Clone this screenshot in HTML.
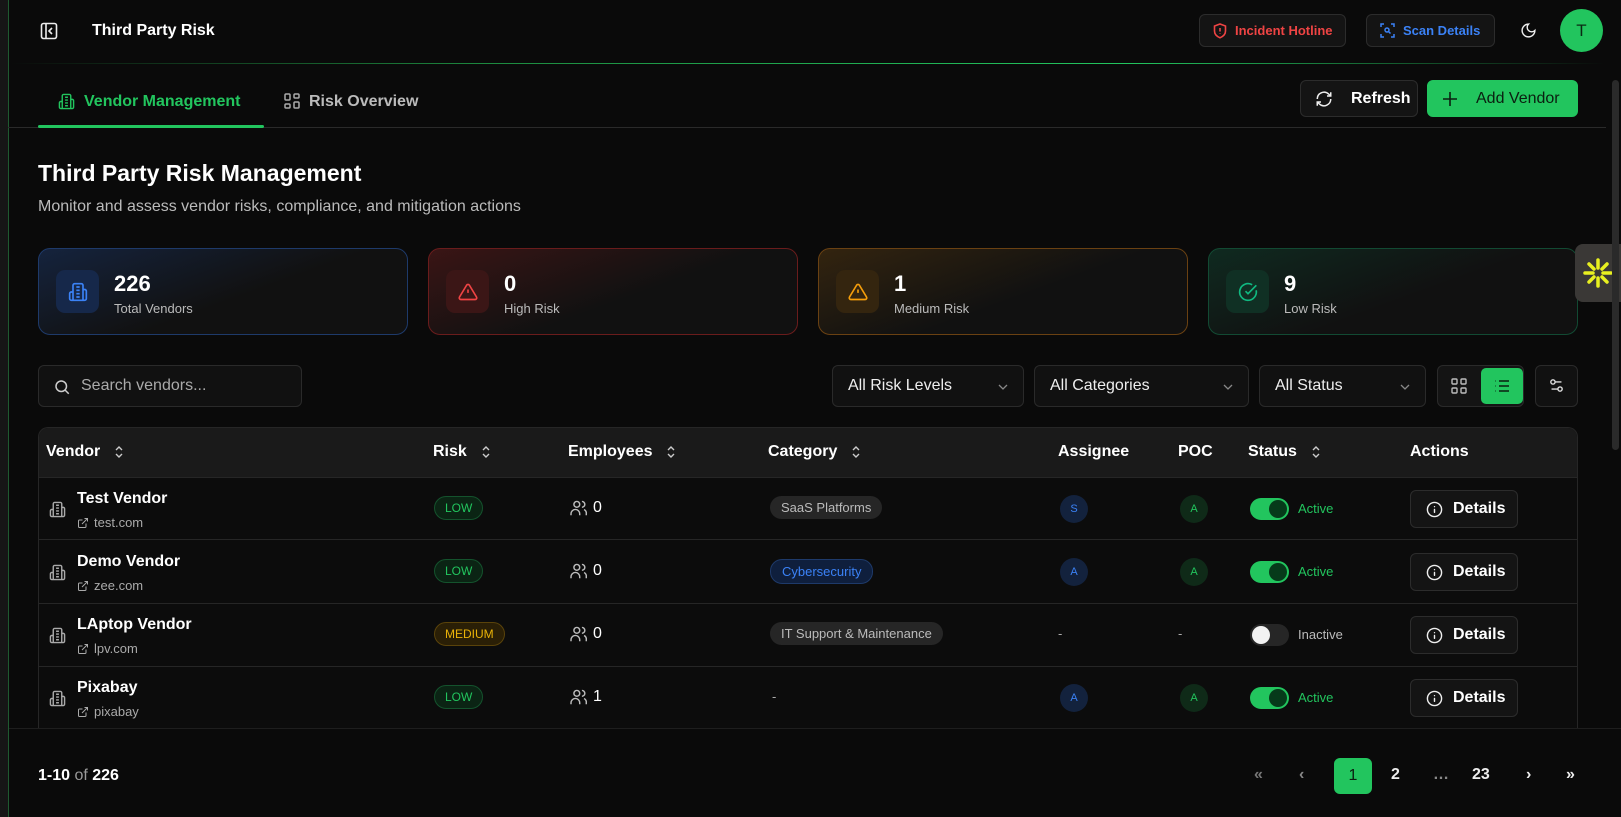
<!DOCTYPE html>
<html><head><meta charset="utf-8"><style>
*{box-sizing:border-box;margin:0;padding:0}
body{width:1621px;height:817px;overflow:hidden;background:#0a0a0a;font-family:"Liberation Sans",sans-serif;color:#fff;position:relative}
.abs{position:absolute}
svg{display:block}
.btn{position:absolute;border:1px solid #2c2c2c;background:#141414;border-radius:6px;display:flex;align-items:center;font-size:13px;font-weight:bold}
.card{position:absolute;top:248px;width:370px;height:87px;border-radius:12px;border:1px solid}
.card .ib{position:absolute;left:17px;top:21px;width:43px;height:43px;border-radius:9px;display:flex;align-items:center;justify-content:center}
.card .n{position:absolute;left:75px;top:22px;font-size:22px;font-weight:bold}
.card .l{position:absolute;left:75px;top:52px;font-size:13px;color:#bbb}
.sel{position:absolute;top:365px;height:42px;border:1px solid #2a2a2a;background:#111;border-radius:6px;font-size:16px;color:#eee;display:flex;align-items:center;padding-left:15px}
.sel svg{position:absolute;right:14px;top:15px}
.th{position:absolute;top:443px;font-size:16px;font-weight:bold;display:flex;align-items:center;gap:14px}
.row{position:absolute;left:38px;width:1540px;border-top:1px solid #262626}
.vn{position:absolute;left:39px;font-size:16px;font-weight:bold}
.vu{position:absolute;left:39px;font-size:13px;color:#aaa;display:flex;align-items:center;gap:5px}
.pill{position:absolute;font-size:12px;border-radius:12px;padding:4px 10px;border:1px solid}
.cat{position:absolute;left:732px;font-size:13px;border-radius:12px;padding:4px 11px;background:#262626;color:#bbb}
.av{position:absolute;width:28px;height:28px;border-radius:50%;font-size:11px;display:flex;align-items:center;justify-content:center}
.tog{position:absolute;left:1212px;width:39px;height:22px;border-radius:11px}
.tog i{position:absolute;top:2px;width:18px;height:18px;border-radius:50%}
.st{position:absolute;left:1260px;font-size:13px}
.det{position:absolute;left:1372px;width:108px;height:38px;border:1px solid #2c2c2c;background:#141414;border-radius:6px;display:flex;align-items:center;gap:10px;padding-left:15px;font-size:16px;font-weight:bold}
.pg{position:absolute;top:766px;font-size:16px;font-weight:bold;color:#eee}
</style></head><body>
<svg width="0" height="0" style="position:absolute"><defs>
<symbol id="srt" viewBox="0 0 10 16"><path d="M2 6l3-3 3 3M2 10l3 3 3-3" fill="none" stroke="#ccc" stroke-width="1.4"/></symbol>
<symbol id="inf" viewBox="0 0 24 24"><circle cx="12" cy="12" r="10" fill="none" stroke="#eee" stroke-width="2"/><path d="M12 16v-4M12 8h.01" stroke="#eee" stroke-width="2" stroke-linecap="round"/></symbol>
<symbol id="bld" viewBox="0 0 24 24"><path fill="none" stroke="#aaa" stroke-width="2" d="M6 22V4a2 2 0 0 1 2-2h8a2 2 0 0 1 2 2v18zM6 12H4a2 2 0 0 0-2 2v6a2 2 0 0 0 2 2h2M18 9h2a2 2 0 0 1 2 2v9a2 2 0 0 1-2 2h-2M10 6h4M10 10h4M10 14h4M10 18h4"/></symbol>
<symbol id="ext" viewBox="0 0 24 24"><path fill="none" stroke="#aaa" stroke-width="2" d="M15 3h6v6M10 14 21 3M18 13v6a2 2 0 0 1-2 2H5a2 2 0 0 1-2-2V8a2 2 0 0 1 2-2h6"/></symbol>
</defs></svg>
<div class="abs" style="left:0;top:0;width:8px;height:817px;background:#161616"></div>
<div class="abs" style="left:8px;top:0;width:1px;height:817px;background:#1f5a30"></div>
<div class="abs" style="left:10px;top:63px;width:1595px;height:1px;background:linear-gradient(90deg,#0a0a0a,#1d8a3f 30%,#22c55e 70%,#0a0a0a)"></div>
<!-- header -->
<svg class="abs" style="left:40px;top:22px" width="18" height="18" viewBox="0 0 18 18" fill="none" stroke="#eee" stroke-width="1.6"><rect x="1.5" y="1.5" width="15" height="15" rx="2"/><path d="M6 1.5v15M12 6l-3 3 3 3"/></svg>
<div class="abs" style="left:92px;top:22px;font-size:16px;font-weight:bold">Third Party Risk</div>
<div class="btn" style="left:1199px;top:14px;width:147px;height:33px;color:#ef4444;padding-left:13px;gap:8px"><svg width="14" height="16" viewBox="0 0 14 16" fill="none" stroke="#ef4444" stroke-width="1.6"><path d="M7 1l5.5 2v5c0 3.5-2.5 5.5-5.5 6.8C4 13.5 1.5 11.5 1.5 8V3z"/><path d="M7 5v3.5M7 10.5v.5"/></svg>Incident Hotline</div>
<div class="btn" style="left:1366px;top:14px;width:129px;height:33px;color:#3b82f6;padding-left:13px;gap:8px"><svg width="15" height="15" viewBox="0 0 15 15" fill="none" stroke="#3b82f6" stroke-width="1.5"><path d="M1 4V1h3M11 1h3v3M14 11v3h-3M4 14H1v-3"/><circle cx="7" cy="7" r="2"/><path d="M8.5 8.5l2 2"/></svg>Scan Details</div>
<svg class="abs" style="left:1520px;top:22px" width="17" height="17" viewBox="0 0 24 24" fill="none" stroke="#eee" stroke-width="2"><path d="M12 3a6 6 0 0 0 9 9 9 9 0 1 1-9-9z"/></svg>
<div class="abs" style="left:1560px;top:9px;width:43px;height:43px;border-radius:50%;background:#22c55e;color:#0a2a14;font-size:17px;display:flex;align-items:center;justify-content:center">T</div>
<!-- tabs -->
<svg class="abs" style="left:58px;top:93px" width="17" height="17" viewBox="0 0 24 24" fill="none" stroke="#22c55e" stroke-width="2"><path d="M6 22V4a2 2 0 0 1 2-2h8a2 2 0 0 1 2 2v18zM6 12H4a2 2 0 0 0-2 2v6a2 2 0 0 0 2 2h2M18 9h2a2 2 0 0 1 2 2v9a2 2 0 0 1-2 2h-2M10 6h4M10 10h4M10 14h4M10 18h4"/></svg>
<div class="abs" style="left:84px;top:93px;font-size:16px;color:#22c55e;font-weight:bold">Vendor Management</div>
<svg class="abs" style="left:284px;top:93px" width="16" height="16" viewBox="0 0 16 16" fill="none" stroke="#aaa" stroke-width="1.5"><rect x="1" y="1" width="5" height="6" rx="1"/><rect x="10" y="1" width="5" height="4" rx="1"/><rect x="10" y="9" width="5" height="6" rx="1"/><rect x="1" y="11" width="5" height="4" rx="1"/></svg>
<div class="abs" style="left:309px;top:93px;font-size:16px;color:#bbb;font-weight:bold">Risk Overview</div>
<div class="abs" style="left:8px;top:127px;width:1598px;height:1px;background:#2a2a2a"></div>
<div class="abs" style="left:38px;top:125px;width:226px;height:3px;background:#22c55e;border-radius:2px"></div>
<div class="btn" style="left:1300px;top:80px;width:118px;height:37px;padding-left:14px;gap:18px;font-size:16px"><svg width="18" height="18" viewBox="0 0 24 24" fill="none" stroke="#eee" stroke-width="2"><path d="M3 12a9 9 0 0 1 15-6.7L21 8M21 3v5h-5M21 12a9 9 0 0 1-15 6.7L3 16M3 21v-5h5"/></svg>Refresh</div>
<div class="btn" style="left:1427px;top:80px;width:151px;height:37px;background:#22c55e;border-color:#22c55e;padding-left:14px;gap:18px;font-size:16px;color:#0b1f10;font-weight:normal"><svg width="16" height="16" viewBox="0 0 16 16" stroke="#0b1f10" stroke-width="1.6"><path d="M8 1v14M1 8h14"/></svg>Add Vendor</div>
<!-- title -->
<div class="abs" style="left:38px;top:160px;font-size:23px;font-weight:bold">Third Party Risk Management</div>
<div class="abs" style="left:38px;top:198px;font-size:16px;color:#bbb">Monitor and assess vendor risks, compliance, and mitigation actions</div>
<!-- cards -->
<div class="card" style="left:38px;border-color:#1e3a6a;background:linear-gradient(160deg,#15233d,#111 55%)"><div class="ib" style="background:#16284a"><svg width="20" height="20" viewBox="0 0 24 24" fill="none" stroke="#3b82f6" stroke-width="2"><path d="M6 22V4a2 2 0 0 1 2-2h8a2 2 0 0 1 2 2v18zM6 12H4a2 2 0 0 0-2 2v6a2 2 0 0 0 2 2h2M18 9h2a2 2 0 0 1 2 2v9a2 2 0 0 1-2 2h-2M10 6h4M10 10h4M10 14h4M10 18h4"/></svg></div><div class="n">226</div><div class="l">Total Vendors</div></div>
<div class="card" style="left:428px;border-color:#6a1c1c;background:linear-gradient(160deg,#3a1515,#111 55%)"><div class="ib" style="background:#3b1616"><svg width="20" height="20" viewBox="0 0 24 24" fill="none" stroke="#ef4444" stroke-width="2"><path d="M10.3 3.9 1.8 18a2 2 0 0 0 1.7 3h17a2 2 0 0 0 1.7-3L13.7 3.9a2 2 0 0 0-3.4 0zM12 9v4M12 17h.01"/></svg></div><div class="n">0</div><div class="l">High Risk</div></div>
<div class="card" style="left:818px;border-color:#6a4112;background:linear-gradient(160deg,#33240f,#111 55%)"><div class="ib" style="background:#34250f"><svg width="20" height="20" viewBox="0 0 24 24" fill="none" stroke="#f59e0b" stroke-width="2"><path d="M10.3 3.9 1.8 18a2 2 0 0 0 1.7 3h17a2 2 0 0 0 1.7-3L13.7 3.9a2 2 0 0 0-3.4 0zM12 9v4M12 17h.01"/></svg></div><div class="n">1</div><div class="l">Medium Risk</div></div>
<div class="card" style="left:1208px;border-color:#124a33;background:linear-gradient(160deg,#0f2a20,#111 55%)"><div class="ib" style="background:#103024"><svg width="20" height="20" viewBox="0 0 24 24" fill="none" stroke="#10b981" stroke-width="2"><path d="M21.8 10A10 10 0 1 1 17 3.3"/><path d="m9 11 3 3L22 4"/></svg></div><div class="n">9</div><div class="l">Low Risk</div></div>
<!-- widget -->
<div class="abs" style="left:1575px;top:244px;width:46px;height:58px;background:#3a3836;border-radius:8px 0 0 8px;display:flex;align-items:center;justify-content:center"><svg width="32" height="32" viewBox="0 0 32 32" stroke="#e8f020" stroke-width="3.5" stroke-linecap="round"><path d="M16 3v8M16 21v8M3 16h8M21 16h8M7 7l5 5M20 20l5 5M25 7l-5 5M12 20l-5 5"/></svg></div>
<div class="abs" style="left:1612px;top:80px;width:7px;height:370px;background:#2a2a2a;border-radius:4px"></div>
<!-- filters -->
<div class="sel" style="left:38px;width:264px;color:#aaa;padding-left:42px"><svg style="left:14px;top:12px;right:auto" width="18" height="18" viewBox="0 0 24 24" fill="none" stroke="#ccc" stroke-width="2"><circle cx="11" cy="11" r="7"/><path d="m21 21-5-5"/></svg>Search vendors...</div>
<div class="sel" style="left:832px;width:192px">All Risk Levels<svg width="12" height="12" viewBox="0 0 12 12" fill="none" stroke="#888" stroke-width="1.3"><path d="M2 4l4 4 4-4"/></svg></div>
<div class="sel" style="left:1034px;width:215px">All Categories<svg width="12" height="12" viewBox="0 0 12 12" fill="none" stroke="#888" stroke-width="1.3"><path d="M2 4l4 4 4-4"/></svg></div>
<div class="sel" style="left:1259px;width:167px">All Status<svg width="12" height="12" viewBox="0 0 12 12" fill="none" stroke="#888" stroke-width="1.3"><path d="M2 4l4 4 4-4"/></svg></div>
<div class="abs" style="left:1437px;top:365px;width:87px;height:42px;border:1px solid #2a2a2a;background:#141414;border-radius:6px"></div>
<svg class="abs" style="left:1451px;top:378px" width="16" height="16" viewBox="0 0 16 16" fill="none" stroke="#bbb" stroke-width="1.4"><rect x="1" y="1" width="5" height="5" rx="1"/><rect x="10" y="1" width="5" height="5" rx="1"/><rect x="1" y="10" width="5" height="5" rx="1"/><rect x="10" y="10" width="5" height="5" rx="1"/></svg>
<div class="abs" style="left:1481px;top:368px;width:42px;height:36px;background:#22c55e;border-radius:5px"></div>
<svg class="abs" style="left:1494px;top:378px" width="16" height="16" viewBox="0 0 16 16" fill="none" stroke="#0b1f10" stroke-width="1.5"><path d="M1 3h.5M1 8h.5M1 13h.5M5 3h10M5 8h10M5 13h10"/></svg>
<div class="abs" style="left:1535px;top:365px;width:43px;height:42px;border:1px solid #2a2a2a;background:#111;border-radius:6px"></div>
<svg class="abs" style="left:1548px;top:377px" width="17" height="17" viewBox="0 0 24 24" fill="none" stroke="#ddd" stroke-width="2"><path d="M14 17H5M19 7h-9"/><circle cx="17" cy="17" r="3"/><circle cx="7" cy="7" r="3"/></svg>
<!-- table -->
<div class="abs" style="left:38px;top:427px;width:1540px;height:310px;border:1px solid #262626;border-bottom:none;border-radius:10px 10px 0 0;background:#0c0c0c;overflow:hidden"><div style="height:50px;background:#1a1a1a"></div></div>
<div class="th" style="left:46px">Vendor <svg width="10" height="16"><use href="#srt"/></svg></div>
<div class="th" style="left:433px">Risk <svg width="10" height="16"><use href="#srt"/></svg></div>
<div class="th" style="left:568px">Employees <svg width="10" height="16"><use href="#srt"/></svg></div>
<div class="th" style="left:768px">Category <svg width="10" height="16"><use href="#srt"/></svg></div>
<div class="th" style="left:1058px">Assignee</div>
<div class="th" style="left:1178px">POC</div>
<div class="th" style="left:1248px">Status <svg width="10" height="16"><use href="#srt"/></svg></div>
<div class="th" style="left:1410px">Actions</div>

<div class="row" style="top:477px;height:62px">
<svg class="abs" style="left:11px;top:23px" width="17" height="17"><use href="#bld"/></svg>
<div class="vn" style="top:12px">Test Vendor</div><div class="vu" style="top:37px"><svg width="12" height="12"><use href="#ext"/></svg>test.com</div>
<div class="pill" style="left:396px;top:18px;color:#22c55e;border-color:#14532d;background:#0b2414">LOW</div>
<div class="cat" style="top:18px">SaaS Platforms</div>
<div class="av" style="left:1022px;top:17px;background:#13223d;color:#3b82f6">S</div>
<div class="av" style="left:1142px;top:17px;background:#0f2a18;color:#22c55e">A</div>
<div class="tog" style="top:20px;background:#22c55e"><i style="left:19px;background:#063a1a"></i></div><div class="st" style="top:23px;color:#22c55e">Active</div>
<div class="det" style="top:12px"><svg width="17" height="17"><use href="#inf"/></svg>Details</div>
</div>
<div class="row" style="top:539px;height:64px">
<svg class="abs" style="left:11px;top:24px" width="17" height="17"><use href="#bld"/></svg>
<div class="vn" style="top:13px">Demo Vendor</div><div class="vu" style="top:38px"><svg width="12" height="12"><use href="#ext"/></svg>zee.com</div>
<div class="pill" style="left:396px;top:19px;color:#22c55e;border-color:#14532d;background:#0b2414">LOW</div>
<div class="cat" style="top:19px;background:#0f1f3d;color:#3b82f6;border:1px solid #1e3a6a">Cybersecurity</div>
<div class="av" style="left:1022px;top:18px;background:#13223d;color:#3b82f6">A</div>
<div class="av" style="left:1142px;top:18px;background:#0f2a18;color:#22c55e">A</div>
<div class="tog" style="top:21px;background:#22c55e"><i style="left:19px;background:#063a1a"></i></div><div class="st" style="top:24px;color:#22c55e">Active</div>
<div class="det" style="top:13px"><svg width="17" height="17"><use href="#inf"/></svg>Details</div>
</div>
<div class="row" style="top:603px;height:63px">
<svg class="abs" style="left:11px;top:23px" width="17" height="17"><use href="#bld"/></svg>
<div class="vn" style="top:12px">LAptop Vendor</div><div class="vu" style="top:37px"><svg width="12" height="12"><use href="#ext"/></svg>lpv.com</div>
<div class="pill" style="left:396px;top:18px;color:#eab308;border-color:#5a430a;background:#2a1f06">MEDIUM</div>
<div class="cat" style="top:18px">IT Support &amp; Maintenance</div>
<div class="abs" style="left:1020px;top:22px;color:#aaa;font-size:13px">-</div>
<div class="abs" style="left:1140px;top:22px;color:#aaa;font-size:13px">-</div>
<div class="tog" style="top:20px;background:#262626"><i style="left:2px;background:#f2f2f2"></i></div><div class="st" style="top:23px;color:#bbb">Inactive</div>
<div class="det" style="top:12px"><svg width="17" height="17"><use href="#inf"/></svg>Details</div>
</div>
<div class="row" style="top:666px;height:62px">
<svg class="abs" style="left:11px;top:23px" width="17" height="17"><use href="#bld"/></svg>
<div class="vn" style="top:12px">Pixabay</div><div class="vu" style="top:37px"><svg width="12" height="12"><use href="#ext"/></svg>pixabay</div>
<div class="pill" style="left:396px;top:18px;color:#22c55e;border-color:#14532d;background:#0b2414">LOW</div>
<div class="abs" style="left:734px;top:22px;color:#aaa;font-size:13px">-</div>
<div class="av" style="left:1022px;top:17px;background:#13223d;color:#3b82f6">A</div>
<div class="av" style="left:1142px;top:17px;background:#0f2a18;color:#22c55e">A</div>
<div class="tog" style="top:20px;background:#22c55e"><i style="left:19px;background:#063a1a"></i></div><div class="st" style="top:23px;color:#22c55e">Active</div>
<div class="det" style="top:12px"><svg width="17" height="17"><use href="#inf"/></svg>Details</div>
</div>
<!-- employee counts -->
<svg class="abs" style="left:570px;top:500px" width="18" height="16" viewBox="0 0 24 22" fill="none" stroke="#bbb" stroke-width="2"><circle cx="9" cy="6" r="4"/><path d="M1 21v-2a6 6 0 0 1 12 0v2M16 2a4 4 0 0 1 0 8M19 13a6 6 0 0 1 3 6v2"/></svg><div class="abs" style="left:593px;top:499px;font-size:16px">0</div>
<svg class="abs" style="left:570px;top:563px" width="18" height="16" viewBox="0 0 24 22" fill="none" stroke="#bbb" stroke-width="2"><circle cx="9" cy="6" r="4"/><path d="M1 21v-2a6 6 0 0 1 12 0v2M16 2a4 4 0 0 1 0 8M19 13a6 6 0 0 1 3 6v2"/></svg><div class="abs" style="left:593px;top:562px;font-size:16px">0</div>
<svg class="abs" style="left:570px;top:626px" width="18" height="16" viewBox="0 0 24 22" fill="none" stroke="#bbb" stroke-width="2"><circle cx="9" cy="6" r="4"/><path d="M1 21v-2a6 6 0 0 1 12 0v2M16 2a4 4 0 0 1 0 8M19 13a6 6 0 0 1 3 6v2"/></svg><div class="abs" style="left:593px;top:625px;font-size:16px">0</div>
<svg class="abs" style="left:570px;top:689px" width="18" height="16" viewBox="0 0 24 22" fill="none" stroke="#bbb" stroke-width="2"><circle cx="9" cy="6" r="4"/><path d="M1 21v-2a6 6 0 0 1 12 0v2M16 2a4 4 0 0 1 0 8M19 13a6 6 0 0 1 3 6v2"/></svg><div class="abs" style="left:593px;top:688px;font-size:16px">1</div>
<!-- footer -->
<div class="abs" style="left:9px;top:728px;width:1612px;height:89px;background:#0a0a0a;border-top:1px solid #1e1e1e"></div>
<div class="abs" style="left:38px;top:767px;font-size:16px;font-weight:bold">1-10 <span style="color:#999;font-weight:normal">of</span> 226</div>
<div class="pg" style="left:1254px;color:#777">«</div>
<div class="pg" style="left:1299px;color:#888">‹</div>
<div class="abs" style="left:1334px;top:758px;width:38px;height:36px;background:#22c55e;border-radius:6px;color:#0b1f10;font-size:16px;display:flex;align-items:center;justify-content:center">1</div>
<div class="pg" style="left:1391px">2</div>
<div class="pg" style="left:1433px;color:#888">…</div>
<div class="pg" style="left:1472px">23</div>
<div class="pg" style="left:1526px">›</div>
<div class="pg" style="left:1566px">»</div>
</body></html>
